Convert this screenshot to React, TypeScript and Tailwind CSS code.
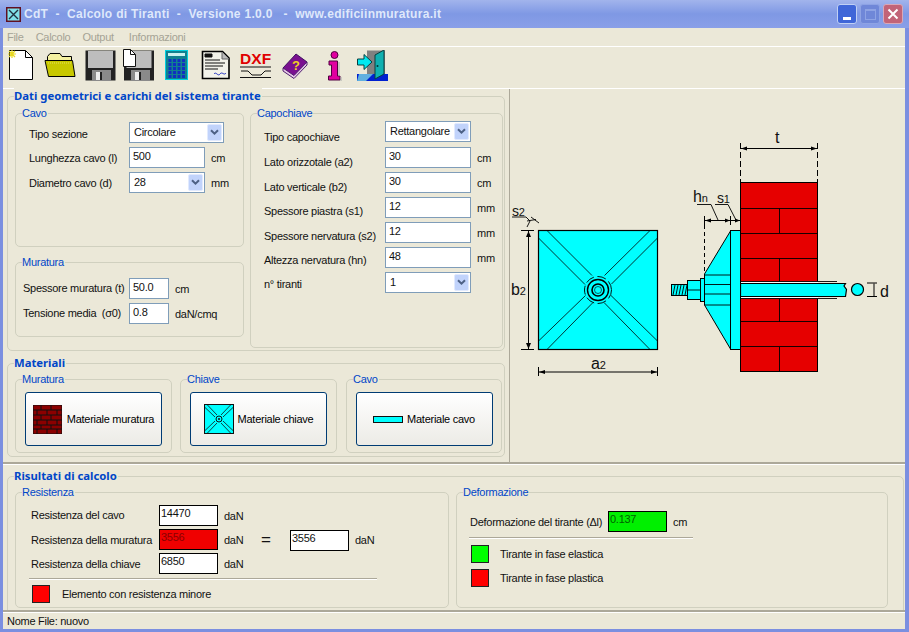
import React from 'react';

const Group: React.FC<{ title: string; className?: string; bold?: boolean; children?: React.ReactNode }> = ({ title, className = '', bold, children }) => (
  <div className={`relative shrink-0 border border-[#d0d0bf] rounded-[5px] ${className}`}>
    <span className={`absolute left-[6px] top-[-9px] bg-[#ebe8d8] pr-[1px] leading-[16px] text-[#0046c8] ${bold ? 'font-bold text-[11.3px] tracking-normal font-["Noto_Sans"]' : ''}`}>{title}</span>
    {children}
  </div>
);

const Chevron = () => (
  <svg width="9" height="7" viewBox="0 0 9 7" fill="none">
    <path d="M1 1.2 L4.5 4.7 L8 1.2" stroke="#4d6185" strokeWidth="2" />
  </svg>
);

const Combo: React.FC<{ value: string; className: string }> = ({ value, className }) => (
  <div className={`flex h-[21px] items-center justify-between border border-[#7f9db9] bg-white pl-[4px] pr-[1px] ${className}`}>
    <span>{value}</span>
    <div className="flex h-[17px] w-[15px] items-center justify-center rounded-[2px] border border-[#e1eafe] bg-[#c1d3fb]">
      <Chevron />
    </div>
  </div>
);

const Input: React.FC<{ value: string; className: string }> = ({ value, className }) => (
  <div className={`h-[21px] border border-[#7f9db9] bg-white pl-[3px] leading-[16px] ${className}`}>{value}</div>
);

const Result: React.FC<{ value: string; className?: string }> = ({ value, className = 'bg-white' }) => (
  <div className={`h-[21px] w-[59px] shrink-0 border border-black pl-[1px] leading-[15px] ${className}`}>{value}</div>
);

const Row: React.FC<{ label: string; labelClass: string; unit?: string; children: React.ReactNode; rowClass?: string }> = ({ label, labelClass, unit, children, rowClass = '' }) => (
  <div className={`flex h-[21px] ${rowClass}`}>
    <span className={`shrink-0 whitespace-pre ${labelClass}`}>{label}</span>
    {children}
    {unit && <span className="ml-[6px] leading-[22px]">{unit}</span>}
  </div>
);

const Legend: React.FC<{ color: string; label: string; gap: string }> = ({ color, label, gap }) => (
  <div className="flex h-[18px] items-center">
    <div className={`h-[18px] w-[18px] shrink-0 border border-[#222] ${color}`} />
    <span className={gap}>{label}</span>
  </div>
);

const Bricks = () => (
  <svg width="29" height="29" viewBox="0 0 29 29" className="shrink-0">
    <rect width="29" height="29" fill="#8b0000" stroke="#111" />
    {[5, 10, 15, 20, 24].map(y => (
      <path key={y} d={`M0 ${y}H29`} stroke="#111" />
    ))}
    <path d="M8 0V5M18 0V5M4 5V10M14 5V10M24 5V10M8 10V15M18 10V15M4 15V20M14 15V20M24 15V20M8 20V24M18 20V24M4 24V29M14 24V29M24 24V29" stroke="#111" />
  </svg>
);

const MiniPlate = () => (
  <svg width="30" height="30" viewBox="0 0 30 30" className="shrink-0">
    <rect x="0.5" y="0.5" width="29" height="29" fill="#00ffff" stroke="#111" />
    <path d="M3 .5L13 11M.5 3L11 13M27 .5L17 11M29.5 3L19 13M.5 27L11 17M3 29.5L13 19M29.5 27L19 17M27 29.5L17 19" stroke="#111" strokeWidth=".8" />
    <circle cx="15" cy="15" r="3" fill="#00ffff" stroke="#111" />
    <circle cx="15" cy="15" r="1" fill="#111" />
  </svg>
);

const MatButton: React.FC<{ label: string; icon: React.ReactNode; gap: string }> = ({ label, icon, gap }) => (
  <div className={`flex h-[54px] w-[137px] items-center justify-center rounded-[3px] border border-[#003c74] bg-gradient-to-b from-white to-[#ecebe6] text-black ${gap}`}>
    {icon}
    <span className="whitespace-nowrap">{label}</span>
  </div>
);

const NewIcon = () => (
  <svg width="28" height="32" viewBox="0 0 28 32" className="shrink-0">
    <path d="M3.5 1.5H19.5L26.5 8.5V30.5H3.5Z" fill="#fff" stroke="#000" />
    <path d="M19.5 1.5V8.5H26.5" fill="none" stroke="#000" />
    <path d="M6 1V9M2 5H10M3 2L9 8M9 2L3 8" stroke="#e8d820" strokeWidth="1.2" />
  </svg>
);

const FolderIcon = () => (
  <svg width="32" height="26" viewBox="0 0 32 26" className="shrink-0">
    <path d="M3.5 8.5V4.5L6 1.5H16L18 4.5H27.5V9" fill="#f4f0a0" stroke="#000" />
    <path d="M1 8.5H28.5L31 24.5H4.5Z" fill="#c8c800" stroke="#000" />
    <path d="M4 11H28" stroke="#e4e060" strokeDasharray="1 1" />
  </svg>
);

const FloppyIcon = () => (
  <svg width="31" height="31" viewBox="0 0 31 31" className="shrink-0">
    <rect x="0.5" y="0.5" width="30" height="30" fill="#222" />
    <rect x="3" y="1" width="25" height="17" fill="#bdbdbd" />
    <rect x="7" y="20" width="19" height="11" fill="#8a8a8a" />
    <rect x="11" y="22" width="4" height="8" fill="#eee" />
    <rect x="15" y="22" width="2" height="8" fill="#222" />
  </svg>
);

const SaveAsIcon = () => (
  <svg width="32" height="32" viewBox="0 0 32 32" className="shrink-0">
    <rect x="1" y="1.5" width="30" height="30" fill="#222" />
    <rect x="3.5" y="2" width="25" height="17" fill="#bdbdbd" />
    <rect x="8" y="21" width="19" height="11" fill="#8a8a8a" />
    <rect x="12" y="23" width="4" height="8" fill="#eee" />
    <rect x="16" y="23" width="2" height="8" fill="#222" />
    <path d="M.5 .5H7.5L12.5 5.5V17.5H.5Z" fill="#fff" stroke="#111" />
    <path d="M7.5 .5V5.5H12.5" fill="none" stroke="#111" />
  </svg>
);

const CalcIcon = () => (
  <svg width="24" height="30" viewBox="0 0 24 30" className="shrink-0">
    <rect x="0.5" y="0.5" width="22" height="29" fill="#108090" stroke="#00d0e0" />
    <rect x="3" y="3" width="17" height="3" fill="#c8f0f0" />
    {[9, 13, 17, 21, 25].map(y =>
      [3.5, 8, 12.5, 17].map(x => <rect key={`${x}-${y}`} x={x} y={y} width="3" height="3" fill="#1030c0" />)
    )}
  </svg>
);

const DocIcon = () => (
  <svg width="29" height="30" viewBox="0 0 29 30" className="shrink-0">
    <path d="M1.5 1.5H21.5L28 8V28.5H1.5Z" fill="#f2f2ea" stroke="#000" strokeWidth="1.6" />
    <path d="M21 2V9H28" fill="#bbb" stroke="#666" />
    <path d="M4 4H11V7H4ZM4 10H19M4 13H24M4 16H22M4 19H17" stroke="#111" fill="#111" />
    <path d="M13 24C15 21 17 27 19 24S23 26 25 23" stroke="#2030c0" fill="none" />
  </svg>
);

const DxfIcon = () => (
  <svg width="32" height="28" viewBox="0 0 32 28" className="shrink-0">
    <text x="0" y="13" fontFamily="Liberation Sans, sans-serif" fontWeight="700" fontSize="15.5" fill="#e00000" textLength="31">DXF</text>
    <path d="M0 16H31M0 26.5H31" stroke="#111" />
    <path d="M1 20H8L12 24H21L25 20H31" stroke="#111" fill="none" />
  </svg>
);

const BookIcon = () => (
  <svg width="26" height="26" viewBox="0 0 26 26" className="shrink-0">
    <path d="M1 15L14 1L25 9L12 24Z" fill="#7a1090" stroke="#401060" />
    <path d="M1 15V18L12 25.5L25 12V9L12 22.5Z" fill="#e8c8e8" stroke="#502070" />
    <text x="10" y="17" fontFamily="Liberation Sans, sans-serif" fontWeight="700" fontSize="13" fill="#f0d020">?</text>
  </svg>
);

const InfoIcon = () => (
  <svg width="16" height="30" viewBox="0 0 16 30" className="shrink-0">
    <circle cx="7.5" cy="4" r="3.5" fill="#e000a0" stroke="#500040" />
    <path d="M2 10H10.5V25H13V29H1.5V25H4.5V14H2Z" fill="#e000a0" stroke="#500040" />
    <path d="M12 11V25M14 26V30" stroke="#aaa" />
  </svg>
);

const ExitIcon = () => (
  <svg width="31" height="31" viewBox="0 0 31 31" className="shrink-0">
    <rect x="10" y="0.5" width="18" height="25" fill="#808080" />
    <path d="M0 24H31V31H0Z" fill="#0020d0" />
    <path d="M2 24H16L9 31H0Z" fill="#60b0e0" />
    <path d="M18 5L27 0V24L18 29Z" fill="#10b0b0" stroke="#064040" />
    <circle cx="20.5" cy="16" r="1" fill="#033" />
    <path d="M0.5 9H7V4.5L15 12L7 19.5V15H0.5Z" fill="#00e8f0" stroke="#064040" />
  </svg>
);

const Arrow: React.FC<{ d: string }> = ({ d }) => <path d={d} fill="#000" stroke="none" />;

const Diagram = () => (
  <svg width="395" height="373" viewBox="510 89 395 373" className="block shrink-0">
    <g stroke="#000" fill="none" fontFamily="Liberation Sans, sans-serif">
      {/* piastra vista frontale */}
      <rect x="538.5" y="230.5" width="119" height="119" fill="#00ffff" strokeWidth="1.2" />
      <path d="M547 230.5L592 275.5M538.5 238L585 284.5M650 230.5L604.5 275.5M657.5 238L611.5 284M538.5 341L585.5 295.5M547 349.5L593 302.5M657.5 341L611 295.5M650 349.5L604 302.5" strokeWidth=".8" />
      <circle cx="598" cy="290" r="13.5" strokeDasharray="9 3.5" strokeWidth=".9" />
      <circle cx="598" cy="290" r="10.5" strokeWidth="1.4" />
      <circle cx="598" cy="290" r="6" strokeWidth="1.6" />
      <circle cx="598" cy="290" r="3.5" strokeWidth=".6" />

      {/* quote piastra */}
      <path d="M528.5 231V349M521 230.5H534M521 349.5H534" strokeWidth="1" />
      <Arrow d="M528.5 231L526 237H531Z" />
      <Arrow d="M528.5 349L526 343H531Z" />
      <path d="M538.5 372H657.5M538.5 367V376M657.5 367V376" strokeWidth="1" />
      <Arrow d="M539 372L545 370V374Z" />
      <Arrow d="M657 372L651 370V374Z" />
      <path d="M512 217H526L530 221L527 227M527 221L536 219.5M531 217L539 223" strokeWidth=".9" />

      {/* muro */}
      <rect x="740.5" y="182.5" width="77" height="189" fill="#e60000" stroke="#000" />
      <path d="M740 208.5H818M740 233.5H818M740 258.5H818M740 298.5H818M740 321.5H818M740 346.5H818M779.5 208V233M779.5 258V282M779.5 298V322M779.5 347V372" strokeWidth=".9" />
      <rect x="741" y="281.5" width="77" height="17" fill="#fff" stroke="none" />
      <path d="M740.5 281.5H837M740.5 298.5H837" strokeWidth=".9" />
      <path d="M740.5 283.5H845.5L844 286L846.5 289.5L845.5 296.5H740.5Z" fill="#00ffff" strokeWidth="1.2" />

      {/* capochiave */}
      <path d="M730.5 231L704.5 274V305L730.5 349Z" fill="#00ffff" />
      <path d="M704.5 275H730.5M704.5 284.5H730.5M704.5 294H730.5M704.5 305H730.5" strokeWidth=".9" />
      <rect x="730.5" y="230.5" width="10" height="119" fill="#00ffff" />
      <rect x="700.5" y="278.5" width="4" height="23" fill="#00ffff" />
      <rect x="687.5" y="280.5" width="13" height="19" fill="#00ffff" />
      <path d="M688 290H700" strokeWidth=".9" />
      <rect x="671.5" y="284.5" width="16" height="11" fill="#00ffff" />
      <path d="M673 295L675 285M676 295L678 285M679 295L681 285M682 295L684 285M685 295L687 285" strokeWidth=".9" />

      {/* tondo */}
      <circle cx="857.5" cy="289.5" r="6" fill="#00ffff" strokeWidth="1.2" />
      <path d="M874 283.5V296M867 283H877M867 296.5H877" strokeWidth="1" />

      {/* quote muro */}
      <path d="M740.5 143V182M817.5 143V182" strokeWidth="1" strokeDasharray="6 3" />
      <path d="M740.5 148.5H817.5" strokeWidth="1" />
      <Arrow d="M741 148.5L747 146.5V150.5Z" />
      <Arrow d="M817 148.5L811 146.5V150.5Z" />
      <path d="M704.5 220.5H740.5M704.5 216V225M730.5 216V225M740.5 216V225" strokeWidth="1" />
      <path d="M704.5 225V274" strokeDasharray="4 3" strokeWidth="1" />
      <path d="M697 204.5H711L718 220M715 204.5H728L736 220" strokeWidth=".9" />
      <Arrow d="M705 220.5L711 218.5V222.5Z" />
      <Arrow d="M730 220.5L725 218.5V222.5Z" />
      <Arrow d="M740 220.5L735 218.5V222.5Z" />

      <g fill="#111" stroke="none" fontSize="16">
        <text x="511" y="295">b<tspan fontSize="11">2</tspan></text>
        <text x="591" y="369">a<tspan fontSize="11">2</tspan></text>
        <text x="512" y="216" fontSize="14">s<tspan fontSize="11">2</tspan></text>
        <text x="775" y="143">t</text>
        <text x="693" y="202">h<tspan fontSize="11">n</tspan></text>
        <text x="717" y="203" fontSize="14">s<tspan fontSize="11">1</tspan></text>
        <text x="880" y="297">d</text>
      </g>
    </g>
  </svg>
);

export default function App() {
  return (
    <div className="flex h-[632px] w-[909px] flex-col overflow-hidden bg-[#7b8fe0] font-['Liberation_Sans',sans-serif] text-[11px] tracking-[-0.27px] text-[#111]">
      {/* title bar */}
      <div className="flex h-[28px] shrink-0 items-center bg-gradient-to-b from-[#a2b4ec] via-[#7f98e4] to-[#8a9fe8] pl-[6px] pr-[6px]">
        <svg width="15" height="15" viewBox="0 0 15 15" className="shrink-0">
          <rect x=".5" y=".5" width="14" height="14" fill="#80e0e8" stroke="#601020" strokeWidth="2" />
          <path d="M3 3L12 12M12 3L3 12" stroke="#203040" strokeWidth="1.4" />
        </svg>
        <span className="ml-[3px] flex-1 whitespace-pre text-[12px] font-bold tracking-[0.3px] text-[#dfe8fb]">CdT  -  Calcolo di Tiranti  -  Versione 1.0.0   -  www.edificiinmuratura.it</span>
        <div className="flex h-[20px] w-[20px] items-end justify-center rounded-[3px] border border-[#c0d0f4] bg-[#3f66d8] pb-[3px]">
          <div className="h-[3px] w-[8px] bg-white" />
        </div>
        <div className="ml-[3px] flex h-[20px] w-[20px] items-center justify-center rounded-[3px] border border-[#8ea3e4] bg-[#6f87d8]">
          <div className="h-[11px] w-[11px] border border-[#8ea3e4] border-t-2" />
        </div>
        <div className="ml-[3px] flex h-[20px] w-[20px] items-center justify-center rounded-[3px] border border-[#d8a8b8] bg-[#c26478]">
          <svg width="12" height="12" viewBox="0 0 12 12"><path d="M1.5 1.5L10.5 10.5M10.5 1.5L1.5 10.5" stroke="#fff" strokeWidth="2" /></svg>
        </div>
      </div>

      {/* window body */}
      <div className="mx-[3px] mr-[4px] flex min-h-0 flex-1 flex-col bg-[#ebe8d8]">
        {/* menu */}
        <div className="flex h-[19px] shrink-0 items-center gap-[12px] border-b border-white pl-[4px] text-[#a5a395]">
          <span>File</span>
          <span>Calcolo</span>
          <span>Output</span>
          <span className="ml-[3px]">Informazioni</span>
        </div>

        {/* toolbar */}
        <div className="flex h-[42px] shrink-0 items-start border-b border-white pl-[3px] pt-[2px]">
          <NewIcon />
          <div className="ml-[10px] mt-[3px]"><FolderIcon /></div>
          <div className="ml-[9px] mt-[1px]"><FloppyIcon /></div>
          <div className="ml-[7px]"><SaveAsIcon /></div>
          <div className="ml-[10px] mt-[1px]"><CalcIcon /></div>
          <div className="ml-[12px] mt-[1px]"><DocIcon /></div>
          <div className="ml-[10px] mt-[2px]"><DxfIcon /></div>
          <div className="ml-[10px] mt-[4px]"><BookIcon /></div>
          <div className="ml-[19px] mt-[2px]"><InfoIcon /></div>
          <div className="ml-[14px] mt-[1px]"><ExitIcon /></div>
        </div>

        {/* inputs + drawing */}
        <div className="flex h-[373px] shrink-0">
          <div className="flex h-full w-[507px] shrink-0 flex-col border-r border-[#aca899] pl-[4px] pt-[7px]">
            <Group title="Dati geometrici e carichi del sistema tirante" bold className="flex h-[255px] w-[498px] gap-[6px] pl-[7px] pt-[16px]">
              <div className="flex flex-col gap-[15px]">
                <Group title="Cavo" className="h-[134px] w-[229px] pl-[13px] pt-[8px]">
                  <div className="flex flex-col gap-[4px]">
                    <Row label="Tipo sezione" labelClass="w-[100px] leading-[24px]">
                      <Combo value="Circolare" className="w-[95px]" />
                    </Row>
                    <Row label="Lunghezza cavo (l)" labelClass="w-[100px] leading-[22px]" unit="cm">
                      <Input value="500" className="w-[76px]" />
                    </Row>
                    <Row label="Diametro cavo (d)" labelClass="w-[100px] leading-[22px]" unit="mm">
                      <Combo value="28" className="w-[76px]" />
                    </Row>
                  </div>
                </Group>
                <Group title="Muratura" className="h-[75px] w-[229px] pl-[7px] pt-[15px]">
                  <div className="flex flex-col gap-[4px]">
                    <Row label="Spessore muratura (t)" labelClass="w-[106px] leading-[20px]" unit="cm">
                      <Input value="50.0" className="w-[40px]" />
                    </Row>
                    <Row label="Tensione media  (σ0)" labelClass="w-[106px] leading-[20px]" unit="daN/cmq">
                      <Input value="0.8" className="w-[40px]" />
                    </Row>
                  </div>
                </Group>
              </div>
              <Group title="Capochiave" className="h-[235px] w-[253px] pl-[13px] pt-[7px]">
                <div className="flex flex-col gap-[4px]">
                  <Row label="Tipo capochiave" labelClass="w-[121px] leading-[32px]" rowClass="mb-[1px]">
                    <Combo value="Rettangolare" className="w-[86px]" />
                  </Row>
                  <Row label="Lato orizzotale (a2)" labelClass="w-[121px] leading-[30px]" unit="cm">
                    <Input value="30" className="w-[86px]" />
                  </Row>
                  <Row label="Lato verticale (b2)" labelClass="w-[121px] leading-[30px]" unit="cm">
                    <Input value="30" className="w-[86px]" />
                  </Row>
                  <Row label="Spessore piastra (s1)" labelClass="w-[121px] leading-[28px]" unit="mm">
                    <Input value="12" className="w-[86px]" />
                  </Row>
                  <Row label="Spessore nervatura (s2)" labelClass="w-[121px] leading-[28px]" unit="mm">
                    <Input value="12" className="w-[86px]" />
                  </Row>
                  <Row label="Altezza nervatura (hn)" labelClass="w-[121px] leading-[26px]" unit="mm">
                    <Input value="48" className="w-[86px]" />
                  </Row>
                  <Row label="n° tiranti" labelClass="w-[121px] leading-[24px]">
                    <Combo value="1" className="w-[86px]" />
                  </Row>
                </div>
              </Group>
            </Group>

            <Group title="Materiali" bold className="mt-[12px] flex h-[94px] w-[498px] pl-[7px] pt-[15px]">
              <Group title="Muratura" className="flex h-[74px] w-[157px] items-start justify-center pt-[12px]">
                <MatButton label="Materiale muratura" icon={<Bricks />} gap="gap-[5px]" />
              </Group>
              <Group title="Chiave" className="ml-[8px] flex h-[74px] w-[157px] items-start justify-center pt-[12px]">
                <MatButton label="Materiale chiave" icon={<MiniPlate />} gap="gap-[4px]" />
              </Group>
              <Group title="Cavo" className="ml-[9px] flex h-[74px] w-[156px] items-start justify-center pt-[12px]">
                <MatButton
                  label="Materiale cavo"
                  gap="gap-[4px]"
                  icon={<div className="h-[7px] w-[30px] border border-[#111] bg-[#00ffff]" />}
                />
              </Group>
            </Group>
          </div>
          <Diagram />
        </div>

        {/* results */}
        <div className="h-[150px] shrink-0 overflow-hidden border-b-2 border-t-2 border-b-[#aca899] border-t-[#aca899] pl-[4px] pt-[12px] shadow-[inset_0_1px_0_#fff]">
          <Group title="Risultati di calcolo" bold className="flex h-[170px] w-[897px] gap-[7px] pl-[7px] pt-[15px]">
            <Group title="Resistenza" className="h-[116px] w-[434px] pl-[15px] pt-[12px]">
              <div className="flex flex-col gap-[3px]">
                <Row label="Resistenza del cavo" labelClass="w-[128px] leading-[20px]" unit="daN">
                  <Result value="14470" />
                </Row>
                <div className="flex h-[21px]">
                  <span className="w-[128px] shrink-0 whitespace-nowrap leading-[22px]">Resistenza della muratura</span>
                  <Result value="3556" className="bg-[#f00000] text-[#8a0000]" />
                  <span className="ml-[6px] w-[31px] leading-[22px]">daN</span>
                  <span className="ml-[6px] w-[29px] text-[17px] leading-[21px]">=</span>
                  <Result value="3556" className="mt-[1px] bg-white" />
                  <span className="ml-[6px] leading-[22px]">daN</span>
                </div>
                <Row label="Resistenza della chiave" labelClass="w-[128px] leading-[22px]" unit="daN">
                  <Result value="6850" />
                </Row>
              </div>
              <div className="ml-[-2px] mt-[4px] h-[2px] w-[348px] border-b border-white bg-[#aca899]" />
              <div className="ml-[1px] mt-[5px]">
                <Legend color="bg-[#ff0000]" label="Elemento con resistenza minore" gap="ml-[12px]" />
              </div>
            </Group>
            <Group title="Deformazione" className="h-[116px] w-[432px] pl-[13px] pt-[18px]">
              <Row label="Deformazione del tirante (Δl)" labelClass="w-[138px] leading-[22px]" unit="cm">
                <Result value="0.137" className="bg-[#00f000] text-[#006000]" />
              </Row>
              <div className="ml-[-1px] mt-[5px] h-[2px] w-[224px] border-b border-white bg-[#aca899]" />
              <div className="ml-[1px] mt-[6px] flex flex-col gap-[6px]">
                <Legend color="bg-[#00ff00]" label="Tirante in fase elastica" gap="ml-[11px]" />
                <Legend color="bg-[#ff0000]" label="Tirante in fase plastica" gap="ml-[11px]" />
              </div>
            </Group>
          </Group>
        </div>

        {/* status */}
        <div className="flex h-[17px] shrink-0 items-center border-t border-white pl-[4px]">Nome File: nuovo</div>
      </div>
      <div className="h-[3px] shrink-0" />
    </div>
  );
}
